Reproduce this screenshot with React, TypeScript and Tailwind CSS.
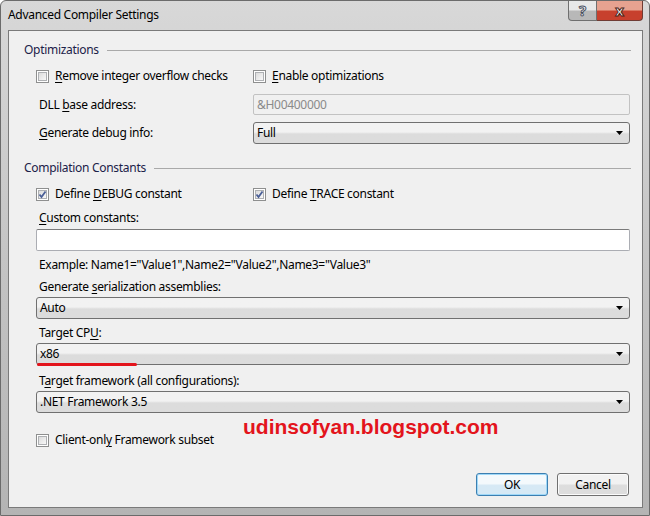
import React from "react"

const font = { fontFamily: '"Noto Sans", "Open Sans", sans-serif', letterSpacing: "-0.3px" }

const U = ({ children }: { children: React.ReactNode }) => <span className="underline underline-offset-2">{children}</span>

const CheckBox = ({ checked }: { checked?: boolean }) => (
    <div className="relative w-[13px] h-[13px] border border-[#8e8f8f] bg-white shrink-0">
        <div className="absolute inset-[1px] border border-[#aeb0b3] bg-gradient-to-br from-[#dcdcdc] to-[#f8f8f8]" />
        {checked && (
            <svg className="absolute inset-0" width="11" height="11" viewBox="0 0 11 11">
                <path d="M2.5 5.5 L4.5 8 L8.5 2.5" fill="none" stroke="#4a5f97" strokeWidth="1.8" />
            </svg>
        )}
    </div>
)

const Check = ({ checked, children }: { checked?: boolean; children: React.ReactNode }) => (
    <div className="flex items-center gap-[6px] h-4">
        <CheckBox checked={checked} />
        <span>{children}</span>
    </div>
)

const Combo = ({ value }: { value: string }) => (
    <div className="flex items-center justify-between h-[22px] w-full rounded-[3px] border border-[#707070] bg-gradient-to-b from-[#f2f2f2] from-45% to-[#dcdcdc] to-55% pl-[3px] pr-[6px]">
        <span className="text-black">{value}</span>
        <svg width="7" height="4" viewBox="0 0 7 4"><path d="M0 0 H7 L3.5 4 Z" fill="#000" /></svg>
    </div>
)

const Header = ({ children }: { children: React.ReactNode }) => (
    <div className="flex items-center h-4 pl-[15px] pr-[11px] gap-[8px]">
        <span className="text-[#1b2148] whitespace-nowrap">{children}</span>
        <div className="flex-1 h-px bg-[#a9a9a9]" />
    </div>
)

export default function App() {
    return (
        <div style={font} className="relative w-[650px] h-[516px] text-[12px] text-black bg-gradient-to-b from-[#d8d8d8] via-[#c4c4c4] to-[#b4b4b4] rounded-t-[6px] border border-[#6b6b6b] overflow-hidden">
            {/* title bar */}
            <div className="flex items-start h-[29px]">
                <span className="pl-[7px] pt-[5px] text-[12px] text-black">Advanced Compiler Settings</span>
                <div className="ml-auto mr-[6px] flex">
                    <div className="w-[29px] h-[20px] rounded-bl-[4px] border border-t-0 border-[#6f6f6f] bg-gradient-to-b from-[#e8e8e8] from-45% to-[#b8b8b8] to-55% flex items-center justify-center">
                        <span className="text-[15px] font-bold text-white leading-none" style={{ WebkitTextStroke: "1px #4a4f5e" }}>?</span>
                    </div>
                    <div className="w-[46px] h-[20px] rounded-br-[4px] border border-t-0 border-l-0 border-[#6f3b33] bg-gradient-to-b from-[#e6a290] from-45% to-[#c7402d] to-55% flex items-center justify-center">
                        <span className="text-[15px] font-bold text-white leading-none" style={{ WebkitTextStroke: "1px #4b1f19" }}>x</span>
                    </div>
                </div>
            </div>

            {/* client area */}
            <div className="relative ml-[7px] mr-[6px] h-[478px] border border-[#7a7a7a] bg-[#f0f0f0] flex flex-col">
                <div className="mt-[11px]"><Header>Optimizations</Header></div>

                <div className="pl-[27px] pr-[12px] flex flex-col">
                    <div className="mt-[10px] grid grid-cols-[217px_1fr]">
                        <Check><U>R</U>emove integer overflow checks</Check>
                        <Check><U>E</U>nable optimizations</Check>
                    </div>
                    <div className="mt-[10px] grid grid-cols-[217px_1fr] items-center">
                        <span className="pl-[3px]">DLL <U>b</U>ase address:</span>
                        <div className="h-[21px] border border-[#c2c2c2] rounded-[2px] bg-[#f0f0f0] flex items-center pl-[3px] text-[#8a8a8a]">&amp;H00400000</div>
                    </div>
                    <div className="mt-[7px] grid grid-cols-[217px_1fr] items-center">
                        <span className="pl-[3px]"><U>G</U>enerate debug info:</span>
                        <Combo value="Full" />
                    </div>
                </div>

                <div className="mt-[16px]"><Header>Compilation Constants</Header></div>

                <div className="pl-[27px] pr-[12px] flex flex-col">
                    <div className="mt-[10px] grid grid-cols-[217px_1fr]">
                        <Check checked>Define <U>D</U>EBUG constant</Check>
                        <Check checked>Define <U>T</U>RACE constant</Check>
                    </div>
                    <div className="mt-[8px] h-4 pl-[3px] flex items-center"><span><U>C</U>ustom constants:</span></div>
                    <div className="mt-[3px] h-[22px] border border-[#abadb3] border-t-[#7a7a7a] bg-white rounded-[2px]" />
                    <div className="mt-[6px] h-4 pl-[3px] flex items-center">Example: Name1="Value1",Name2="Value2",Name3="Value3"</div>
                    <div className="mt-[6px] h-4 pl-[3px] flex items-center"><span>Generate <U>s</U>erialization assemblies:</span></div>
                    <div className="mt-[2px]"><Combo value="Auto" /></div>
                    <div className="mt-[6px] h-4 pl-[3px] flex items-center"><span>Target CP<U>U</U>:</span></div>
                    <div className="mt-[2px] relative">
                        <Combo value="x86" />
                        <div className="absolute left-[1px] top-[20px] w-[100px] h-[3px] rounded-full bg-[#e3141c]" />
                    </div>
                    <div className="mt-[8px] h-4 pl-[3px] flex items-center"><span>T<U>a</U>rget framework (all configurations):</span></div>
                    <div className="mt-[2px]"><Combo value=".NET Framework 3.5" /></div>
                    <div className="mt-[19px]">
                        <Check>Client-onl<U>y</U> Framework subset</Check>
                    </div>
                    <div className="mt-[25px] pr-[1px] flex justify-end gap-[9px]">
                        <button className="w-[72px] h-[23px] rounded-[3px] border border-[#3c7fb1] bg-gradient-to-b from-[#f4f9fc] from-45% to-[#d6e9f5] to-55% shadow-[inset_0_0_0_1px_#9fd8f8]">OK</button>
                        <button className="w-[72px] h-[23px] rounded-[3px] border border-[#707070] bg-gradient-to-b from-[#f2f2f2] from-45% to-[#dddddd] to-55% shadow-[inset_0_0_0_1px_#fbfbfb]">Cancel</button>
                    </div>
                </div>

                <div className="absolute left-[234px] top-[385px] text-[21px] font-bold text-[#e3141c] leading-none tracking-normal" style={{ fontFamily: '"Liberation Sans", Arial, sans-serif', letterSpacing: 0 }}>
                    udinsofyan.blogspot.com
                </div>
            </div>
        </div>
    )
}
